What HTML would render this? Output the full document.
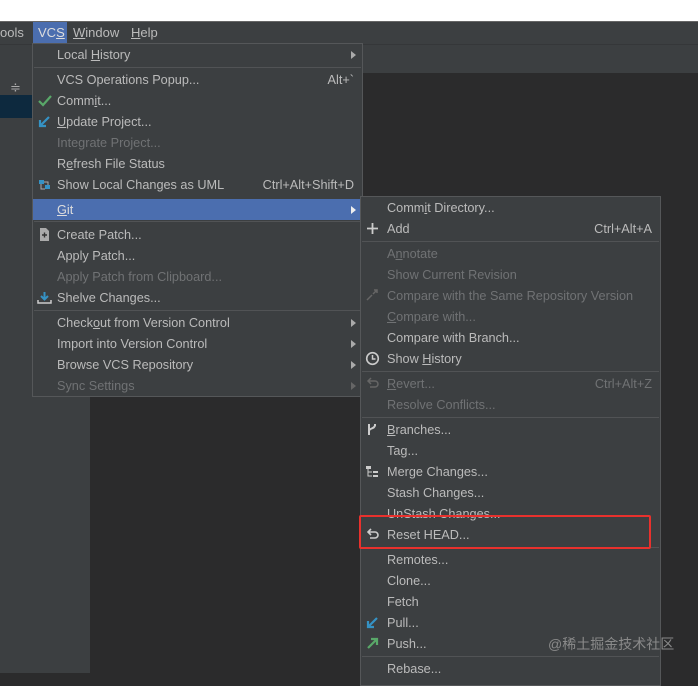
<!DOCTYPE html>
<html><head><meta charset="utf-8"><style>
*{margin:0;padding:0;box-sizing:border-box}
body{width:698px;height:673px;overflow:hidden;position:relative;background:#2b2b2c;font-family:"Liberation Sans","Noto Sans CJK SC",sans-serif;font-size:12.7px;color:#bbbbbb}
.abs{position:absolute}
.menu{position:absolute;background:#3c3f41;border:1px solid #555759}
.it{position:absolute;left:0;right:0;height:21px;line-height:22px;padding-left:24px;white-space:nowrap}
.sub .it{padding-left:26px}
.it .sc{position:absolute;right:8px;top:0}
.dis{color:#707274}
.sep{position:absolute;left:1px;right:1px;height:1px;background:#515355}
.arr{position:absolute;right:6px;top:7px;width:0;height:0;border-left:5px solid #aaa;border-top:4px solid transparent;border-bottom:4px solid transparent}
.ic{position:absolute;left:4px;top:3px;width:15px;height:15px}
u{text-decoration:underline}
</style></head><body>
<div class="abs" style="left:0;top:0;width:698px;height:21px;background:#fff"></div>
<div class="abs" style="left:0;top:21px;width:698px;height:1px;background:#666"></div>
<div class="abs" style="left:0;top:22px;width:698px;height:22px;background:#3c3f41"></div>
<div class="abs" style="left:0;top:44px;width:698px;height:29px;background:#3c3f41;border-top:1px solid #353739"></div>
<div class="abs" style="left:0;top:73px;width:90px;height:600px;background:#3c3f41"></div>
<div class="abs" style="left:0;top:95px;width:33px;height:23px;background:#0d293e"></div>
<div class="abs" style="left:10px;top:80px;color:#aaa;font-size:13px">≑</div>
<div class="abs" style="left:0;top:25px;color:#bbb;font-size:13px">ools</div>
<div class="abs" style="left:33px;top:22px;width:34px;height:22px;background:#4b6eaf"></div>
<div class="abs" style="left:38px;top:25px;color:#ddd;font-size:13px">VC<u>S</u></div>
<div class="abs" style="left:73px;top:25px;font-size:13px"><u>W</u>indow</div>
<div class="abs" style="left:131px;top:25px;font-size:13px"><u>H</u>elp</div>

<div class="menu" style="left:32px;top:43px;width:331px;height:354px">
<div class="it" style="top:0">Local <u>H</u>istory<span class="arr"></span></div>
<div class="sep" style="top:23px"></div>
<div class="it" style="top:25px">VCS Operations Popup...<span class="sc">Alt+`</span></div>
<div class="it" style="top:46px"><svg class="ic" viewBox="0 0 15 15"><path d="M2 8l4 4 8-9" stroke="#59a869" stroke-width="2.2" fill="none"/></svg>Comm<u>i</u>t...</div>
<div class="it" style="top:67px"><svg class="ic" viewBox="0 0 15 15"><path d="M12 3L3 12M3 6v6h6" stroke="#3592c4" stroke-width="2.2" fill="none"/></svg><u>U</u>pdate Project...</div>
<div class="it dis" style="top:88px">Integrate Project...</div>
<div class="it" style="top:109px">R<u>e</u>fresh File Status</div>
<div class="it" style="top:130px"><svg class="ic" viewBox="0 0 15 15"><rect x="2" y="3" width="5" height="4" fill="#3592c4"/><rect x="8" y="8" width="5" height="4" fill="#3592c4"/><path d="M4 7v5h4M7 5h4v3" stroke="#aaa" fill="none"/></svg>Show Local Changes as UML<span class="sc">Ctrl+Alt+Shift+D</span></div>
<div class="it" style="top:155px;background:#4b6eaf;color:#ddd"><u>G</u>it<span class="arr" style="border-left-color:#eee"></span></div>
<div class="sep" style="top:177px"></div>
<div class="it" style="top:180px"><svg class="ic" viewBox="0 0 15 15"><path d="M3 1h6l3 3v10H3z" fill="#aaa"/><path d="M5 8h5M7.5 5.5v5" stroke="#333" stroke-width="1.4"/></svg>Create Patch...</div>
<div class="it" style="top:201px">Apply Patch...</div>
<div class="it dis" style="top:222px">Apply Patch from Clipboard...</div>
<div class="it" style="top:243px"><svg class="ic" viewBox="0 0 15 15"><path d="M7.5 2v7M4 6l3.5 3.5L11 6" stroke="#3592c4" stroke-width="2" fill="none"/><path d="M1 10v3h13v-3" stroke="#ccc" stroke-width="1.5" fill="none"/></svg>Shelve Changes...</div>
<div class="sep" style="top:266px"></div>
<div class="it" style="top:268px">Check<u>o</u>ut from Version Control<span class="arr"></span></div>
<div class="it" style="top:289px">Import into Version Control<span class="arr"></span></div>
<div class="it" style="top:310px">Browse VCS Repository<span class="arr"></span></div>
<div class="it dis" style="top:331px">Sync Settings<span class="arr" style="border-left-color:#666"></span></div>
</div>

<div class="menu sub" style="left:360px;top:196px;width:301px;height:490px">
<div class="it" style="top:0">Comm<u>i</u>t Directory...</div>
<div class="it" style="top:21px"><svg class="ic" viewBox="0 0 15 15"><path d="M7.5 2v11M2 7.5h11" stroke="#ccc" stroke-width="1.8"/></svg>Add<span class="sc">Ctrl+Alt+A</span></div>
<div class="sep" style="top:44px"></div>
<div class="it dis" style="top:46px">A<u>n</u>notate</div>
<div class="it dis" style="top:67px">Show Current Revision</div>
<div class="it dis" style="top:88px"><svg class="ic" viewBox="0 0 15 15"><path d="M2 12l5-5M8 6l4-4M9 2h3v3" stroke="#666" stroke-width="1.5" fill="none"/></svg>Compare with the Same Repository Version</div>
<div class="it dis" style="top:109px"><u>C</u>ompare with...</div>
<div class="it" style="top:130px">Compare with Branch...</div>
<div class="it" style="top:151px"><svg class="ic" viewBox="0 0 15 15"><circle cx="7.5" cy="7.5" r="5.8" stroke="#ccc" stroke-width="1.6" fill="none"/><path d="M7.5 4v4h3" stroke="#ccc" stroke-width="1.5" fill="none"/></svg>Show <u>H</u>istory</div>
<div class="sep" style="top:174px"></div>
<div class="it dis" style="top:176px"><svg class="ic" viewBox="0 0 15 15"><path d="M4 5h6a3 3 0 010 6H5M6 2L3 5l3 3" stroke="#666" stroke-width="1.5" fill="none"/></svg><u>R</u>evert...<span class="sc">Ctrl+Alt+Z</span></div>
<div class="it dis" style="top:197px">Resolve Conflicts...</div>
<div class="sep" style="top:220px"></div>
<div class="it" style="top:222px"><svg class="ic" viewBox="0 0 15 15"><path d="M4 2v11M4 9c0-3 6-2 6-6M10 2v2" stroke="#ccc" stroke-width="2" fill="none"/></svg><u>B</u>ranches...</div>
<div class="it" style="top:243px">Tag...</div>
<div class="it" style="top:264px"><svg class="ic" viewBox="0 0 15 15"><rect x="1" y="2" width="5" height="3" fill="#ccc"/><path d="M3 5v7h4M3 8h4" stroke="#ccc" fill="none"/><rect x="8" y="7" width="5" height="2" fill="#ccc"/><rect x="8" y="11" width="5" height="2" fill="#ccc"/></svg>Merge Changes...</div>
<div class="it" style="top:285px">Stash Changes...</div>
<div class="it" style="top:306px">UnStash Changes...</div>
<div class="it" style="top:327px"><svg class="ic" viewBox="0 0 15 15"><path d="M4 5h6a3 3 0 010 6H5M6 2L3 5l3 3" stroke="#ccc" stroke-width="1.6" fill="none"/></svg>Reset HEAD...</div>
<div class="sep" style="top:350px"></div>
<div class="it" style="top:352px">Remotes...</div>
<div class="it" style="top:373px">Clone...</div>
<div class="it" style="top:394px">Fetch</div>
<div class="it" style="top:415px"><svg class="ic" viewBox="0 0 15 15"><path d="M12 3L3 12M3 6v6h6" stroke="#3592c4" stroke-width="2.2" fill="none"/></svg>Pull...</div>
<div class="it" style="top:436px"><svg class="ic" viewBox="0 0 15 15"><path d="M3 12l9-9M6 3h6v6" stroke="#59a869" stroke-width="2.2" fill="none"/></svg>Push...</div>
<div class="sep" style="top:459px"></div>
<div class="it" style="top:461px">Rebase...</div>
</div>
<div class="abs" style="left:359px;top:515px;width:292px;height:34px;border:2px solid #e8312d;border-radius:2px"></div>
<div class="abs" style="left:548px;top:634px;color:#8a8a8a;font-size:14px">@稀土掘金技术社区</div>
</body></html>
